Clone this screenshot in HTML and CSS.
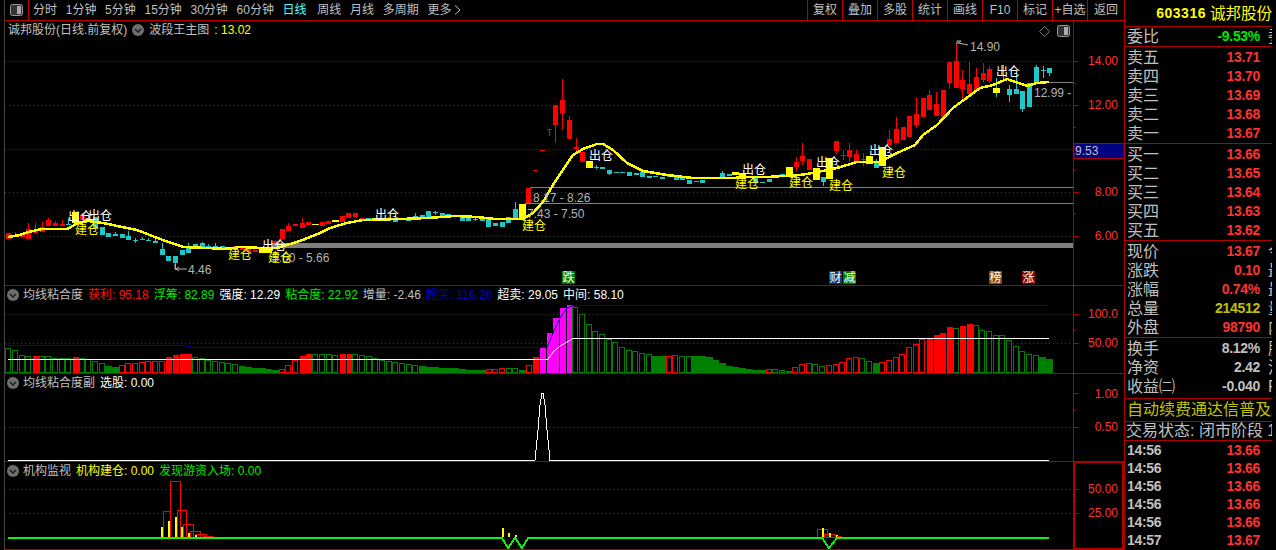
FILE: index.html
```html
<!DOCTYPE html>
<html lang="zh">
<head>
<meta charset="utf-8">
<title>诚邦股份 日线</title>
<link rel="stylesheet" href="styles.css">
</head>
<body>
<div class="app">
  <main class="left">
    <header class="toolbar">
      <div class="tb-toggle">
        <svg class="panel-ico" width="13" height="12" viewBox="0 0 13 12"><rect x="0.5" y="0.5" width="12" height="11" rx="2" class="pi-frame"/><rect x="7" y="2" width="4" height="8" class="pi-fill"/></svg>
      </div>
      <nav class="periods">
        <span>分时</span><span>1分钟</span><span>5分钟</span><span>15分钟</span><span>30分钟</span><span>60分钟</span><span class="active">日线</span><span class="after-active">周线</span><span>月线</span><span>多周期</span><span class="more">更多<svg class="chev" width="7" height="10" viewBox="0 0 7 10"><path d="M1 .5l5 4.5-5 4.5"/></svg></span>
      </nav>
      <div class="actions">
        <span>复权</span><span>叠加</span><span>多股</span><span>统计</span><span>画线</span><span>F10</span><span>标记</span><span>+自选</span><span class="last">返回</span>
      </div>
    </header>

    <section class="chart">
      <svg id="canvas" class="canvas" width="1124" height="529" viewBox="0 21 1124 529">
        <g class="grid">
          <line x1="5" x2="1073" y1="61.5" y2="61.5"/><line x1="5" x2="1073" y1="105.5" y2="105.5"/><line x1="5" x2="1073" y1="149.5" y2="149.5"/><line x1="5" x2="1073" y1="192.5" y2="192.5"/><line x1="5" x2="1073" y1="236.5" y2="236.5"/>
          <line x1="5" x2="1073" y1="314.5" y2="314.5"/><line x1="5" x2="1073" y1="343.5" y2="343.5"/>
          <line x1="5" x2="1073" y1="427.5" y2="427.5"/>
          <line x1="5" x2="1073" y1="489.5" y2="489.5"/><line x1="5" x2="1073" y1="513.5" y2="513.5"/>
        </g>
        <line class="left-rule" x1="4.5" x2="4.5" y1="21" y2="550"/>
        <g class="levels">
          <line x1="530" x2="1073" y1="187.5" y2="187.5"/>
          <line x1="525" x2="1073" y1="203.5" y2="203.5"/>
          <line x1="1049" x2="1073" y1="82.5" y2="82.5"/>
        </g>
        <rect class="support" x="271" y="243" width="802" height="5"/>
        <g id="candles"></g>
        <polyline id="ma" class="ma"/>
        <g class="prices">
          <text x="970" y="51">14.90</text><text x="188" y="274">4.46</text><text x="1034" y="97">12.99 -</text>
          <text x="533" y="202">8.17 - 8.26</text><text x="527" y="218">7.43 - 7.50</text><text x="272" y="262">5.60 - 5.66</text>
        </g>
        <g class="signals">
          <text class="buy" x="75" y="234">建仓</text><text class="sell" x="68" y="221">出仓</text><text class="sell" x="88" y="220">出仓</text>
          <text class="buy" x="228" y="259">建仓</text><text class="sell" x="262" y="250">出仓</text><text class="buy" x="268" y="262">建仓</text>
          <text class="sell" x="375" y="219">出仓</text><text class="buy" x="522" y="230">建仓</text><text class="sell" x="589" y="160">出仓</text>
          <text class="sell" x="742" y="174">出仓</text><text class="buy" x="735" y="188">建仓</text><text class="buy" x="789" y="187">建仓</text>
          <text class="sell" x="816" y="167">出仓</text><text class="buy" x="829" y="190">建仓</text><text class="sell" x="869" y="155">出仓</text>
          <text class="buy" x="882" y="177">建仓</text><text class="sell" x="996" y="76">出仓</text>
        </g>
        <g class="pointers">
          <polyline points="957,44 957,41 961,41 958,43 968,45"/>
          <polyline points="175,264 175,269 187,269"/><polyline points="179,267 176,269 179,271"/>
        </g>
        <g class="tags">
          <rect class="tag-green" x="562" y="271" width="13" height="13"/><text x="562.5" y="282">跌</text>
          <rect class="tag-blue" x="829" y="271" width="13" height="13"/><text x="829.5" y="282">财</text>
          <rect class="tag-green" x="843" y="271" width="13" height="13"/><text x="843.5" y="282">减</text>
          <rect class="tag-brown" x="989" y="271" width="13" height="13"/><text x="989.5" y="282">榜</text>
          <rect class="tag-red" x="1022" y="271" width="13" height="13"/><text x="1022.5" y="282">涨</text>
        </g>
        <g id="bars"></g>
        <polyline class="l-blue" points="8,345.5 185,345.5 192,347.5 547,347.5 553,333 560,318 567,308 573,305.5 1049,305.5"/>
        <polyline class="l-white" points="8,359.5 548,359.5 553,352 560,346 567,342 573,338.5 1049,338.5"/>
        <polyline class="l-peak" points="8,460.5 535,460.5 536,450 538,430 540,405 542,393 543,393 545,405 547,430 549,450 550,460.5 1049,460.5"/>
        <g id="inst"></g>
        <polyline class="l-green" points="8,538 502,538 508,548 515,538 522,548 528,538 822,538 829,548 837,538 1049,538"/>
        <g class="axis">
          <line x1="1073.5" x2="1073.5" y1="21" y2="550"/>
          <path d="M1073 61.5h6M1073 83.5h3M1073 105.5h6M1073 127.5h3M1073 170.5h3M1073 192.5h6M1073 213.5h3M1073 236.5h6M1073 314.5h6M1073 330.5h3M1073 343.5h6M1073 393.5h6M1073 410.5h3M1073 427.5h6M1073 489.5h6M1073 501.5h3M1073 513.5h6"/>
        </g>
        <g class="axis-labels">
          <text x="1118" y="65">14.00</text><text x="1118" y="109">12.00</text><text x="1118" y="196">8.00</text><text x="1118" y="240">6.00</text>
          <text x="1118" y="318">100.0</text><text x="1118" y="347">50.00</text><text x="1118" y="398">1.00</text><text x="1118" y="431">0.50</text>
          <text x="1118" y="493">50.00</text><text x="1118" y="517">25.00</text>
        </g>
        <rect class="last-box" x="1074" y="143.5" width="50" height="15"/>
        <text class="last-text" x="1075" y="155">9.53</text>
        <rect class="inst-box" x="1074" y="462" width="49" height="87"/>
      </svg>

      <div class="pane pane-main">
        <div class="legend">
          <span class="title">诚邦股份(日线.前复权)</span>
          <svg class="fold" width="12" height="12" viewBox="0 0 12 12"><circle cx="6" cy="6" r="6"/><path d="M3 5l3 3 3-3"/></svg>
          <span class="title">波段王主图</span>
          <span class="yellow">: 13.02</span>
        </div>
        <div class="pane-tools">
          <svg class="diamond" width="11" height="11" viewBox="0 0 11 11"><path d="M5.5 .5l5 5-5 5-5-5z"/></svg>
          <svg class="panel-ico" width="13" height="12" viewBox="0 0 13 12"><rect x="0.5" y="0.5" width="12" height="11" rx="2" class="pi-frame"/><rect x="7" y="2" width="4" height="8" class="pi-fill"/></svg>
        </div>
      </div>
      <div class="pane pane-sub">
        <div class="legend indent">
          <svg class="fold" width="12" height="12" viewBox="0 0 12 12"><circle cx="6" cy="6" r="6"/><path d="M3 5l3 3 3-3"/></svg>
          <span class="title">均线粘合度</span>
          <span class="red">获利: 95.18</span><span class="green">浮筹: 82.89</span><span class="white">强度: 12.29</span><span class="green">粘合度: 22.92</span><span class="title">增量: -2.46</span><span class="blue">超买: 116.20</span><span class="white">超卖: 29.05</span><span class="white">中间: 58.10</span>
        </div>
      </div>
      <div class="pane pane-sub">
        <div class="legend indent">
          <svg class="fold" width="12" height="12" viewBox="0 0 12 12"><circle cx="6" cy="6" r="6"/><path d="M3 5l3 3 3-3"/></svg>
          <span class="title">均线粘合度副</span>
          <span class="white">选股: 0.00</span>
        </div>
      </div>
      <div class="pane pane-sub">
        <div class="legend indent">
          <svg class="fold" width="12" height="12" viewBox="0 0 12 12"><circle cx="6" cy="6" r="6"/><path d="M3 5l3 3 3-3"/></svg>
          <span class="title">机构监视</span>
          <span class="yellow">机构建仓: 0.00</span><span class="green">发现游资入场: 0.00</span>
        </div>
      </div>
    </section>
  </main>

  <aside class="side">
    <div class="side-inner">
      <div class="stock"><b>603316</b><span>诚邦股份</span></div>

      <div class="group one"><div class="row"><span>委比</span><b class="up-green">-9.53%</b><i>委</i></div></div>

      <div class="group five first">
        <div class="row"><span>卖五</span><b class="rise">13.71</b></div>
        <div class="row"><span>卖四</span><b class="rise">13.70</b></div>
        <div class="row"><span>卖三</span><b class="rise">13.69</b></div>
        <div class="row"><span>卖二</span><b class="rise">13.68</b></div>
        <div class="row"><span>卖一</span><b class="rise">13.67</b></div>
      </div>
      <div class="group five">
        <div class="row"><span>买一</span><b class="rise">13.66</b></div>
        <div class="row"><span>买二</span><b class="rise">13.65</b></div>
        <div class="row"><span>买三</span><b class="rise">13.64</b></div>
        <div class="row"><span>买四</span><b class="rise">13.63</b></div>
        <div class="row"><span>买五</span><b class="rise">13.62</b></div>
      </div>
      <div class="group five">
        <div class="row"><span>现价</span><b class="rise">13.67</b><i>今</i></div>
        <div class="row"><span>涨跌</span><b class="rise">0.10</b><i>最</i></div>
        <div class="row"><span>涨幅</span><b class="rise">0.74%</b><i>最</i></div>
        <div class="row"><span>总量</span><b class="vol">214512</b><i>量</i></div>
        <div class="row"><span>外盘</span><b class="rise">98790</b><i>内</i></div>
      </div>
      <div class="group three">
        <div class="row"><span>换手</span><b>8.12%</b><i>股</i></div>
        <div class="row"><span>净资</span><b>2.42</b><i>流</i></div>
        <div class="row"><span>收益㈡</span><b>-0.040</b><i>P</i></div>
      </div>
      <div class="group notice">自动续费通达信普及版</div>
      <div class="group status">交易状态: 闭市阶段 1</div>
      <div class="ticks">
        <div class="tick"><b>14:56</b><b class="rise">13.66</b></div>
        <div class="tick"><b>14:56</b><b class="rise">13.66</b></div>
        <div class="tick"><b>14:56</b><b class="rise">13.66</b></div>
        <div class="tick"><b>14:56</b><b class="rise">13.66</b></div>
        <div class="tick"><b>14:56</b><b class="rise">13.66</b></div>
        <div class="tick"><b>14:57</b><b class="rise">13.67</b></div>
      </div>
    </div>
  </aside>
</div>
<script src="chart.js"></script>
</body>
</html>
```
FILE: styles.css
```css
* { box-sizing: border-box; }
html, body { margin: 0; height: 100%; background: #000; overflow: hidden; }
body { font: 12px/17px "Liberation Sans", "Noto Sans CJK SC", sans-serif; color: #c0c0c0; }
.app { display: grid; grid-template-columns: 1124px 152px; height: 550px; }
.left { display: flex; flex-direction: column; height: 550px; min-width: 0; }

/* toolbar */
.toolbar { display: flex; height: 21px; margin-left: 4px; border-left: 1px solid #444; border-bottom: 1px solid #c00000; line-height: 20px; white-space: nowrap; }
.tb-toggle { width: 24px; height: 20px; padding: 4px 0 0 5px; border-right: 1px solid #c00000; }
.panel-ico { display: block; }
.pi-frame { fill: #333; stroke: #999; }
.pi-fill { fill: #aaa; }
.periods { display: flex; gap: 8.7px; margin-left: 4px; }
.periods .active { color: #54ffff; }
.periods .after-active { margin-left: 2px; }
.more { display: flex; align-items: center; gap: 3px; }
.chev { display: block; }
.chev path { fill: none; stroke: #c0c0c0; }
.actions { display: flex; margin-left: auto; }
.actions span { width: 35px; text-align: center; border-left: 1px solid #c00000; }
.actions .last { width: 37px; }

/* chart */
.chart { position: relative; flex: 1; min-height: 0; display: flex; flex-direction: column; }
.canvas { position: absolute; left: 0; top: 0; display: block; }
.pane { position: relative; border-bottom: 1px solid #b00000; margin-left: 5px; }
.pane-main { height: 265px; }
.pane-sub { height: 88px; }
.legend { display: flex; align-items: center; gap: 5px; height: 18px; margin-left: 3px; white-space: nowrap; }
.legend.indent { margin-left: 2px; }
.fold { flex: none; }
.fold circle { fill: #6e6e6e; }
.fold path { fill: none; stroke: #1c1c1c; stroke-width: 1.5; }
.legend.indent .fold { margin-right: -1px; }
.title { color: #c0c0c0; }
.yellow { color: #ffff00; }
.green { color: #00e800; }
.red { color: #ff1010; }
.white { color: #fff; }
.blue { color: #0000c8; }
.pane-tools { position: absolute; right: 54px; top: 4px; display: flex; gap: 7px; align-items: center; }
.diamond path { fill: none; stroke: #777; }

/* svg drawing */
.grid line { stroke: #c00000; stroke-dasharray: 1 3; }
.left-rule { stroke: #444; }
.levels line { stroke: #808080; }
.support { fill: #808080; }
.ma { fill: none; stroke: #ffff00; stroke-width: 2.5; shape-rendering: crispEdges; }
.k-r { fill: #ff0000; }
.k-c { fill: #1fc8c8; }
.k-y { fill: #ffff00; }
.signals text { font-size: 12px; }
.signals .buy { fill: #ffff00; }
.signals .sell { fill: #fff; }
.prices text { font-size: 12px; fill: #b4b4b4; }
.pointers polyline { fill: none; stroke: #b4b4b4; }
.tags text { font-size: 12px; fill: #fff; }
.tag-green { fill: #008000; }
.tag-blue { fill: #0f3c70; }
.tag-brown { fill: #8a4a10; }
.tag-red { fill: #800000; }
.b-g { fill: none; stroke: #008000; }
.b-G { fill: #008000; }
.b-r { fill: none; stroke: #ff0000; }
.b-R { fill: #ff0000; }
.b-M { fill: #ff00ff; }
.l-blue { fill: none; stroke: #0000b4; }
.l-white { fill: none; stroke: #fff; }
.l-peak { fill: none; stroke: #fff; stroke-width: 1; shape-rendering: crispEdges; }
.l-green { fill: none; stroke: #10f010; stroke-width: 2; shape-rendering: crispEdges; }
.i-r { fill: none; stroke: #ff0000; }
.i-y { fill: #ffff00; }
.axis line { stroke: #b00000; }
.axis path { stroke: #b00000; fill: none; }
.axis-labels text { font-size: 12px; fill: #ff3232; text-anchor: end; }
.last-box { fill: #000080; stroke: #b00000; }
.last-text { font-size: 12px; fill: #c0c0c0; }
.inst-box { fill: none; stroke: #b00000; stroke-width: 2; }

/* side panel */
.side { border-left: 1px solid #b00000; padding-right: 4px; height: 550px; }
.side-inner { overflow: hidden; height: 550px; }
.stock { display: flex; justify-content: flex-end; align-items: center; height: 27px; border-bottom: 1px solid #b00000; color: #ffff00; white-space: nowrap; padding-top: 1px; }
.stock b { font-size: 14px; letter-spacing: .5px; margin-right: 4px; }
.stock span { font-size: 15.5px; }
.group { border-bottom: 1px solid #b00000; }
.one { height: 20px; }
.five { height: 97px; padding-top: 1px; }
.three { height: 61px; padding-top: 1px; }
.row { display: flex; align-items: center; height: 19px; padding-left: 2px; font-size: 16px; line-height: 19px; white-space: nowrap; }
.row span { flex: none; color: #c0c0c0; }
.row b { flex: 1; text-align: right; font-size: 14px; letter-spacing: -.3px; color: #c0c0c0; }
.row i { flex: none; width: 11px; margin-left: 8px; margin-right: -7px; font-style: normal; font-size: 16px; overflow: hidden; color: #c0c0c0; }
.row:not(:has(i)) b { margin-right: 12px; }
.rise { color: #ff3232 !important; }
.up-green { color: #00e800 !important; }
.vol { color: #c0c000 !important; }
.notice { height: 23px; padding-left: 2px; font-size: 16px; line-height: 21px; color: #c0c000; white-space: nowrap; overflow: hidden; }
.status { height: 19px; padding-left: 1px; font-size: 16px; line-height: 18px; white-space: nowrap; overflow: hidden; }
.tick { display: flex; justify-content: space-between; height: 18px; padding: 0 12px 0 2px; font-size: 14px; line-height: 18px; letter-spacing: -.3px; }
```
FILE: chart.js
```js
// Daily candles: [x, kind, bodyTop, bodyBottom, wickHigh, wickLow]
const candles = [
  [8,'r',233,239],[15,'r',235,237,232],[22,'r',235,237],[28,'r',229,239,223],[35,'r',230,233,223],[42,'r',227,232,222],
  [48,'r',220,226,218],[55,'r',223,226,221],[62,'r',224,226,220],[68,'c',224,225,218],[75,'y',212,223],[82,'r',216,220,213],
  [88,'y',219,222],[95,'c',217,228],[102,'c',227,235],[108,'c',233,237],[115,'c',234,236,232],[122,'c',234,238],[128,'c',236,240,231],
  [135,'c',240,241,238,243],[142,'c',239,240,237],[148,'c',240,241,238],[155,'c',241,243,238],[162,'c',249,255,243],[168,'c',256,261],
  [175,'c',256,263,256,270],[182,'c',250,255],[188,'c',248,253,243],[195,'c',244,247],[202,'c',243,247,242],[208,'c',246,248,244],
  [215,'c',246,249,243],[222,'c',246,248],[228,'y',247,249],[235,'r',246,248],[242,'r',247,250],[248,'r',249,252],[255,'r',250,252],
  [262,'y',248,253],[268,'y',248,253],[275,'r',241,243,240],[282,'r',229,239],[288,'r',226,231,223],[295,'r',224,226],[302,'r',223,228,218],
  [308,'r',222,225],[315,'y',224,225],[322,'r',222,226],[328,'r',221,224],[335,'y',220,222],[342,'r',216,222],[348,'r',213,218],
  [355,'r',213,217],[362,'r',218,219],[368,'c',218,220],[375,'y',218,221],[382,'c',218,220],[388,'c',219,221,217],[395,'c',218,222,216],
  [402,'c',218,220],[408,'c',218,221],[415,'c',216,218,213],[422,'c',215,219],[428,'c',211,218],[435,'c',212,213,211,215],[442,'c',213,218],
  [448,'c',214,216],[455,'c',215,217],[462,'c',217,221],[468,'c',218,221],[475,'c',219,220,216,221],[482,'c',219,221],[488,'c',219,227],
  [495,'c',223,226],[502,'c',222,227],[508,'c',217,223],[515,'c',209,219,202],[522,'y',204,219],[528,'r',188,203],[535,'r',170,171],
  [542,'r',150,151],[549,'r',129,130,129,136],[555,'r',105,125,105,143],[562,'r',100,113,79,130],[569,'r',120,139,116],[576,'r',147,149,138,152],
  [582,'r',152,162],[589,'y',161,168],[596,'c',167,168,165,169],[602,'c',167,169],[609,'c',170,174,170,175],[616,'c',172,173],[622,'c',172,173],
  [629,'c',172,176],[636,'c',173,175],[642,'c',172,177],[649,'c',176,178],[655,'c',176,177],[662,'c',177,179],[669,'c',176,177],[676,'c',177,180],
  [682,'c',178,180],[689,'c',180,184],[696,'c',181,182],[702,'c',180,183],[709,'c',177,178],[716,'c',177,178],[722,'c',173,177,171],[729,'c',174,176],
  [735,'y',172,175],[742,'y',173,179],[749,'c',176,178],[755,'c',178,183],[762,'c',182,183],[769,'c',179,182],[775,'c',177,178],[782,'c',174,176],
  [789,'y',167,175],[796,'r',162,167,157,171],[802,'r',156,161,143,165],[809,'r',159,170],[816,'y',168,180],[823,'c',177,182,177,186],[829,'y',158,179],
  [836,'r',141,151,141,154],[843,'r',155,156,150,160],[849,'r',150,157,143,162],[856,'r',154,162,150,163],[863,'r',159,160,153,166],[869,'y',156,164],
  [876,'c',163,168,159],[882,'y',147,166],[889,'r',139,145,130],[896,'r',129,143,117],[903,'r',127,140],[909,'r',116,137],[916,'r',114,125,98,128],
  [923,'r',98,117],[929,'r',95,110,90],[936,'r',104,116,92],[943,'r',90,117],[949,'r',62,83,62,89],[956,'r',61,88,43],[962,'r',80,89,70,100],
  [969,'r',84,94,62],[976,'r',77,91,68],[983,'r',73,80,63,83],[989,'r',69,81,66,83],[996,'c',88,89,78,97],[996,'y',88,93],[1003,'c',75,76,65,80],
  [1009,'c',89,95,85,102],[1016,'c',89,94,73],[1022,'c',91,109,91,112],[1029,'c',83,107],[1036,'c',67,83,65],[1043,'c',70,71,66,78],[1049,'c',68,73,68,76]
];

const movingAverage = [
  [8,237],[20,235],[28,232],[42,229],[67,229],[78,223],[88,221],[103,223],[127,228],[137,230],[160,239],[183,247],[207,248],[227,249],[240,247],
  [263,248],[277,248],[300,241],[320,233],[330,228],[347,223],[363,220],[400,219],[428,218],[455,216],[477,217],[495,219],[523,219],[533,213],
  [543,202],[553,185],[563,170],[573,155],[583,149],[597,144],[603,144],[613,150],[627,163],[643,171],[667,175],[693,178],[733,178],[747,177],
  [767,177],[800,175],[813,173],[837,168],[857,162],[880,162],[897,153],[915,145],[923,135],[937,125],[953,108],[980,88],[993,85],[1007,79],
  [1027,86],[1037,83],[1049,82]
];

// Histogram tops: kind letter + y in the zoomed reading, three runs with their origin
const histogram = [
  [180, 'g503 g510 g525 g528 R527 g528 g528 g533 g533 g535 R532 g535 g538 g543 g550 G558 G560 r555 r550 r550 r545 r543 r543 r543 R532 R525 R522 R522 g530 g535 g540 g543 g545 g550 g553 G558 G560 G563 G565 G568 G570 r568 r555 r540 R528 R522 g522 g522 g522 g525 R522 R522 g522 g525 g528 g535 g540 g543 g545'],
  [60, 'g910 g912 g915 G918 G921 G921 G923 G924 G925 G927 G930 G930 G930 r928 r928 r925 g925 g925 G930 r915 R891 M863 M820 M773 M743 M735 g740 g763 g792 g813 g822 g838 g847 g862 g870 g873 g880 g882 G888 G888 r888 r885 g888 g888 G888 G888 G892 G900 G908 G918 G920 G925 G927 G930 G930 r927 g927 g931 G933 r922'],
  [130, 'r703 r700 g703 g708 r706 r703 r697 r685 r682 g685 g694 G699 r697 r691 r682 r672 r652 r642 r628 R623 R615 R609 R591 g595 R588 R582 g586 g600 g604 g616 g616 g631 g649 g664 g673 g676 G681 G687']
];

// Institution panel: hollow red boxes [x0, x1, top] and yellow bars [x, top]
const instBoxes = [[163,170,511],[170,180,481],[177,186,510],[183,193,524],[190,200,531],[196,206,534],[203,213,536],[817,827,529],[824,835,534]];
const instBars = [[161,527],[168,521],[175,517],[181,527],[188,533],[195,535],[502,528],[508,533],[515,535],[522,537],[822,528],[829,533],[836,535]];

const NS = 'http://www.w3.org/2000/svg';
function add(parent, tag, attrs) {
  const node = document.createElementNS(NS, tag);
  for (const k in attrs) node.setAttribute(k, attrs[k]);
  parent.appendChild(node);
  return node;
}

const kGroup = document.getElementById('candles');
for (const [x, kind, top, bot, hi = top, lo = bot] of candles) {
  const cx = Math.round(x);
  const half = kind === 'y' ? 3 : 2;
  add(kGroup, 'rect', { class: 'k-' + kind, x: cx, y: hi, width: 1, height: lo - hi });
  add(kGroup, 'rect', { class: 'k-' + kind, x: cx - half, y: top, width: half * 2 + 1, height: Math.max(bot - top, 1) });
}
add(kGroup, 'rect', { class: 'k-r', x: 547, y: 129, width: 5, height: 1 });

document.getElementById('ma').setAttribute('points', movingAverage.map(p => p.join(',')).join(' '));

const bGroup = document.getElementById('bars');
const STEP = 6.671, BASE = 373;
let index = 0;
for (const [origin, run] of histogram) {
  for (const token of run.split(' ')) {
    const kind = token[0];
    const top = Math.round(origin + Number(token.slice(1)) / 3);
    const cx = Math.round(8.3 + STEP * index++);
    if (kind === 'g' || kind === 'r') {
      add(bGroup, 'rect', { class: 'b-' + kind, x: cx - 2.5, y: top + 0.5, width: 5, height: BASE - top - 1 });
    } else if (kind === 'G') {
      add(bGroup, 'rect', { class: 'b-G', x: cx - 3, y: top, width: 7, height: BASE - top });
    } else {
      add(bGroup, 'rect', { class: 'b-' + kind, x: cx - 2, y: top, width: 6, height: BASE - top });
    }
  }
}

const iGroup = document.getElementById('inst');
for (const [x0, x1, top] of instBoxes) {
  add(iGroup, 'rect', { class: 'i-r', x: x0 + 0.5, y: top + 0.5, width: x1 - x0, height: 537 - top });
}
for (const [x, top] of instBars) {
  add(iGroup, 'rect', { class: 'i-y', x: x, y: top, width: 2, height: 537 - top });
}
add(iGroup, 'rect', { class: 'k-r', x: 837, y: 536, width: 5, height: 1 });
```
